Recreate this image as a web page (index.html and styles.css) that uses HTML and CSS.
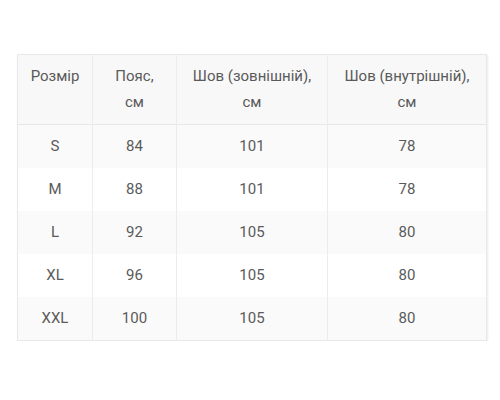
FILE: index.html
```html
<!DOCTYPE html>
<html lang="uk">
<head>
<meta charset="utf-8">
<link rel="stylesheet" href="styles.css">
</head>
<body>
<div class="page">
  <table class="sizes">
    <colgroup>
      <col class="c1"><col class="c2"><col class="c3"><col class="c4">
    </colgroup>
    <thead>
      <tr><th>Розмір</th><th>Пояс,<br>см</th><th>Шов (зовнішній),<br>см</th><th>Шов (внутрішній),<br>см</th></tr>
    </thead>
    <tbody>
      <tr><td>S</td><td>84</td><td>101</td><td>78</td></tr>
      <tr><td>M</td><td>88</td><td>101</td><td>78</td></tr>
      <tr><td>L</td><td>92</td><td>105</td><td>80</td></tr>
      <tr><td>XL</td><td>96</td><td>105</td><td>80</td></tr>
      <tr><td>XXL</td><td>100</td><td>105</td><td>80</td></tr>
    </tbody>
  </table>
</div>
</body>
</html>
```
FILE: styles.css
```css
html, body {
  margin: 0;
  padding: 0;
  background: #fff;
}
.page {
  padding: 54px 0 0 17px;
}
.sizes {
  border-collapse: collapse;
  width: 469px;
  table-layout: fixed;
  font-family: Roboto, "Noto Sans", sans-serif;
  font-size: 15px;
  font-stretch: 88%;
  line-height: 26px;
  color: #5a5a5a;
  border: 1px solid #e8e8e8;
  box-shadow: 1px 1px 2px rgba(0,0,0,0.08);
}
.c1 { width: 75px; }
.c2 { width: 84px; }
.c3 { width: 151px; }
.c4 { width: 159px; }
.sizes th, .sizes td {
  text-align: center;
  font-weight: 400;
  border-left: 1px solid #ececec;
  padding: 8px 4px 9px;
  vertical-align: top;
}
.sizes th:first-child, .sizes td:first-child { border-left: none; }
.sizes thead tr {
  background: #f8f8f8;
  border-bottom: 1px solid #e8e8e8;
}
.sizes tbody tr:nth-child(odd) { background: #fafafa; }
.sizes tbody tr:nth-child(even) { background: #fff; }
```
